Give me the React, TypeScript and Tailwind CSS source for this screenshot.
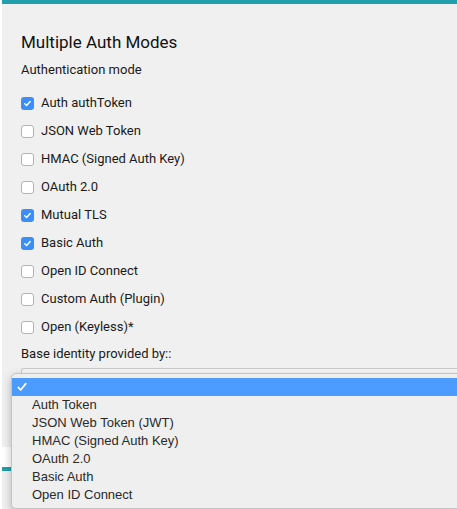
const modes = [
  { label: "Auth authToken", checked: true },
  { label: "JSON Web Token", checked: false },
  { label: "HMAC (Signed Auth Key)", checked: false },
  { label: "OAuth 2.0", checked: false },
  { label: "Mutual TLS", checked: true },
  { label: "Basic Auth", checked: true },
  { label: "Open ID Connect", checked: false },
  { label: "Custom Auth (Plugin)", checked: false },
  { label: "Open (Keyless)*", checked: false },
];

const options = [
  "Auth Token",
  "JSON Web Token (JWT)",
  "HMAC (Signed Auth Key)",
  "OAuth 2.0",
  "Basic Auth",
  "Open ID Connect",
];

function Checkbox({ checked }: { checked: boolean }) {
  if (checked) {
    return (
      <span className="flex h-[13px] w-[13px] items-center justify-center rounded-[3px] bg-[#3a8ef6]">
        <svg width="9" height="9" viewBox="0 0 10 10" fill="none">
          <path d="M2 5.3l2 2L8 2.8" stroke="white" strokeWidth="1.6" strokeLinecap="round" strokeLinejoin="round" />
        </svg>
      </span>
    );
  }
  return <span className="h-[13px] w-[13px] rounded-[3px] border border-[#b3b3b3] bg-white" />;
}

export default function App() {
  return (
    <div className="relative h-[509px] w-[457px] overflow-hidden bg-white font-['Roboto',sans-serif]">
      {/* Panel */}
      <div className="ml-[2px] h-[447px] bg-[#f0f0f0]">
        <div className="h-1 bg-[#209fad]" />
        <div className="pl-[19px]">
          <h2 className="mt-[26px] text-[17px] leading-[24px] text-[#111]">Multiple Auth Modes</h2>
          <p className="mt-[6px] text-[13px] leading-[20px] text-[#1a1a1a]">Authentication mode</p>

          <div className="mt-[9px] flex flex-col">
            {modes.map((m) => (
              <label key={m.label} className="flex h-[28px] items-center gap-[7px] text-[13px] text-[#1a1a1a]">
                <Checkbox checked={m.checked} />
                <span>{m.label}</span>
              </label>
            ))}
          </div>

          <p className="mt-[3px] text-[13px] leading-[20px] text-[#1a1a1a]">Base identity provided by::</p>
          <div className="mt-[4px] h-[30px] rounded-l-[3px] border border-r-0 border-[#c9c9c9] bg-[#f7f7f7]" />
        </div>
      </div>

      {/* Next panel, mostly hidden */}
      <div className="ml-[2px] mt-[20px] h-[60px] bg-[#f0f0f0]">
        <div className="h-1 bg-[#209fad]" />
        <h2 className="ml-[22px] mt-[31px] text-[17px] leading-[24px] text-[#111]">Multiple Auth Modes</h2>
      </div>

      {/* Open select menu */}
      <div className="absolute left-[11px] top-[373px] w-[460px] rounded-[5px] border border-[#c4c4c4] bg-[#efefef] py-[4px] font-['Liberation_Sans',sans-serif] text-[13px] text-[#2a2a2a] shadow-[0_3px_8px_rgba(0,0,0,0.25)]">
        <div className="flex h-[18px] items-center bg-[#4c9cff] pl-[5px]">
          <svg width="10" height="10" viewBox="0 0 10 10" fill="none">
            <path d="M1.3 5.4l2.4 2.6L8.8 1.6" stroke="white" strokeWidth="1.7" strokeLinecap="round" strokeLinejoin="round" />
          </svg>
        </div>
        {options.map((o) => (
          <div key={o} className="flex h-[18px] items-center pl-[20px]">
            {o}
          </div>
        ))}
      </div>
    </div>
  );
}
